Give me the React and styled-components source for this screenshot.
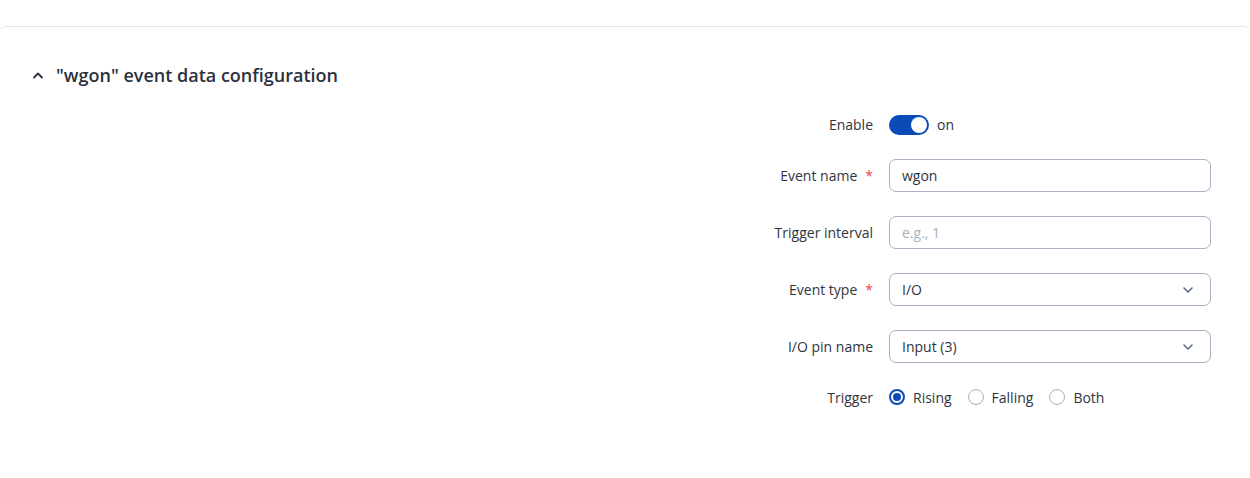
import React from "react";
import styled, { createGlobalStyle } from "styled-components";

const Global = createGlobalStyle`
  html, body { margin: 0; padding: 0; background: #fff; }
  body { font-family: "Open Sans", "Noto Sans", sans-serif; color: #2f3540; }
  * { box-sizing: border-box; }
`;

const Page = styled.div`
  padding-top: 26px;
  width: 1250px;
  height: 478px;
  overflow: hidden;
`;

const Card = styled.section`
  border-top: 1px solid #e3e6eb;
  border-radius: 6px;
  min-height: 450px;
`;

const Header = styled.div`
  display: flex;
  align-items: center;
  gap: 12px;
  padding: 36px 0 0 32px;
  height: 60px;
`;

const Title = styled.h2`
  margin: 0;
  font-size: 18px;
  font-weight: 600;
  color: #2b323d;
`;

const Form = styled.div`
  display: grid;
  grid-template-columns: 1fr 322px;
  column-gap: 16px;
  row-gap: 24px;
  align-items: center;
  padding: 27px 39px 0 0;
`;

const Label = styled.label`
  justify-self: end;
  font-size: 14px;
  color: #2f3540;
  display: flex;
  gap: 8px;
  align-items: center;
  min-height: 20px;
`;

const Req = styled.span`
  color: #e5483f;
  font-size: 14px;
`;

const Inline = styled.div`
  display: flex;
  align-items: center;
  gap: 8px;
  height: 21px;
  font-size: 14px;
`;

const Toggle = styled.span`
  width: 40px;
  height: 20px;
  border-radius: 10px;
  background: #0b4bb8;
  position: relative;
  display: inline-block;
  &::after {
    content: "";
    position: absolute;
    top: 2px;
    right: 2px;
    width: 16px;
    height: 16px;
    border-radius: 50%;
    background: #fff;
  }
`;

const Field = styled.div`
  position: relative;
  height: 33px;
  border: 1px solid #a7b1c2;
  border-radius: 7px;
  display: flex;
  align-items: center;
  padding: 0 12px;
  font-size: 14px;
  color: ${(p) => (p.$placeholder ? "#a9b2bf" : "#2f3540")};
`;

const Chevron = styled.svg`
  position: absolute;
  right: 16px;
  top: 50%;
  transform: translateY(-50%);
`;

const RadioGroup = styled.div`
  display: flex;
  align-items: center;
  height: 20px;
  font-size: 14px;
  gap: 16px;
`;

const RadioItem = styled.span`
  display: flex;
  align-items: center;
  gap: 8px;
`;

const Radio = styled.span`
  width: 16px;
  height: 16px;
  border-radius: 50%;
  border: ${(p) => (p.$checked ? "2px solid #0b4bb8" : "1px solid #a7b1c2")};
  display: inline-flex;
  align-items: center;
  justify-content: center;
  &::after {
    content: "";
    display: ${(p) => (p.$checked ? "block" : "none")};
    width: 8px;
    height: 8px;
    border-radius: 50%;
    background: #0b4bb8;
  }
`;

const Down = () => (
  <Chevron width="12" height="8" viewBox="0 0 12 8">
    <path d="M2 2l4 4 4-4" fill="none" stroke="#5b6a80" strokeWidth="1.6" strokeLinecap="round" strokeLinejoin="round" />
  </Chevron>
);

export default function App() {
  return (
    <Page>
      <Global />
      <Card>
        <Header>
          <svg width="12" height="8" viewBox="0 0 12 8">
            <path d="M2 6.5l4-4 4 4" fill="none" stroke="#2b323d" strokeWidth="1.8" strokeLinecap="round" strokeLinejoin="round" />
          </svg>
          <Title>"wgon" event data configuration</Title>
        </Header>
        <Form>
          <Label>Enable</Label>
          <Inline>
            <Toggle />
            <span>on</span>
          </Inline>

          <Label>Event name <Req>*</Req></Label>
          <Field>wgon</Field>

          <Label>Trigger interval</Label>
          <Field $placeholder>e.g., 1</Field>

          <Label>Event type <Req>*</Req></Label>
          <Field>I/O<Down /></Field>

          <Label>I/O pin name</Label>
          <Field>Input (3)<Down /></Field>

          <Label>Trigger</Label>
          <RadioGroup>
            <RadioItem><Radio $checked />Rising</RadioItem>
            <RadioItem><Radio />Falling</RadioItem>
            <RadioItem><Radio />Both</RadioItem>
          </RadioGroup>
        </Form>
      </Card>
    </Page>
  );
}
